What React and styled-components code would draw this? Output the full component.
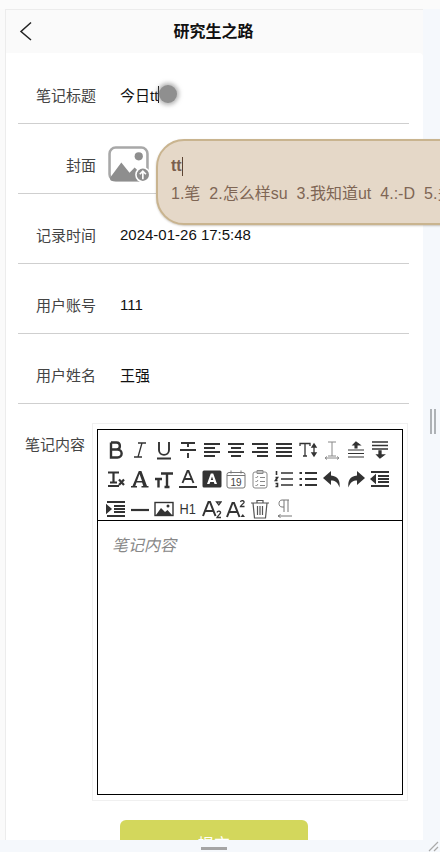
import styled, { createGlobalStyle } from 'styled-components';

const Global = createGlobalStyle`
  html, body { margin: 0; padding: 0; }
  body { font-family: "Liberation Sans", "Noto Sans CJK SC", sans-serif; }
`;

const ink = '#333';

// each toolbar glyph is drawn on a 20x20 grid
const icons = {
  bold: <path d="M5 2.500v15h6.500c5.500 0 5.500 -8 0 -8H5M5 2.500h5.500c4.500 0 4.500 7 0 7" stroke={ink} strokeWidth="2.400" fill="none" />,
  italic: <path d="M8 3h8M4 17h8M12 3l-4 14" stroke={ink} strokeWidth="1.300" fill="none" />,
  underline: <path d="M5 2v8c0 6.500 10 6.500 10 0V2M3 18.500h14" stroke={ink} strokeWidth="1.900" fill="none" />,
  strike: <path d="M3 3h14M10 3v4M2 10h16M10 13v5" stroke={ink} strokeWidth="1.900" fill="none" />,
  left: <path d="M2 4H18M2 8H13M2 12H18M2 16H13" stroke={ink} strokeWidth="1.900" />,
  center: <path d="M2 4H18M5 8H15M2 12H18M5 16H15" stroke={ink} strokeWidth="1.900" />,
  right: <path d="M2 4H18M7 8H18M2 12H18M7 16H18" stroke={ink} strokeWidth="1.900" />,
  justify: <path d="M2 4H18M2 8H18M2 12H18M2 16H18" stroke={ink} strokeWidth="1.900" />,
  size: <path d="M2 6V3.500H12V6M7 3.500V16M5 16H9M16 5v10M14 7l2 -3l2 3zM14 13l2 3l2 -3z" stroke={ink} strokeWidth="1.300" fill={ink} fillOpacity="0" />,
  height: <path d="M6 2h8M6 16h8M10 2v14M3 18h14M3 18l2 -1.500M3 18l2 1.500M17 18l-2 -1.500M17 18l-2 1.500" stroke="#888" strokeWidth="1" fill="none" />,
  before: <path d="M10 2l-3 3h2v3h2V5h3zM2 10H18M2 13.500H18M2 17H18" fill={ink} stroke={ink} strokeWidth="1.100" />,
  after: <path d="M2 2H18M2 5.500H18M2 9H18M10 18l-3 -3h2v-4h2v4h3z" fill={ink} stroke={ink} strokeWidth="1.300" />,
  clear: <path d="M2 3.500h11M7.500 3.500v10M4 13.500h7M2 17h11M13 10.500l5 5.500M18 10.500l-5 5.500" stroke={ink} strokeWidth="2.200" fill="none" />,
  font: <path d="M8.800 2h2.600l5.600 15h1.500v1.500h-7V17h1.800l-1.200 -3.500H6.500L5.300 17H7v1.500H1V17h1.500zM7 12h5L9.500 5z" fill={ink} fillRule="evenodd" />,
  fontSize: <path d="M7 4.500h12M13 3.500v15M10.500 18h5M1 10h7M4.500 10v8.500" stroke={ink} strokeWidth="2.400" fill="none" />,
  fontColor: <path d="M4.500 14l5 -12h1l5 12M6.500 10h7M1 18h18" stroke={ink} strokeWidth="1.900" fill="none" />,
  backColor: <path d="M2 1.500h16a1.500 1.500 0 0 1 1.500 1.500v14a1.500 1.500 0 0 1 -1.500 1.500H2a1.500 1.500 0 0 1 -1.500 -1.500V3A1.500 1.500 0 0 1 2 1.500zM8.800 4.500L5 15h2.500l.7 -2h3.600l.7 2H15L11.200 4.500zM10 7.500l1.200 3.500H8.800z" fill={ink} fillRule="evenodd" />,
  date: (
    <>
      <rect x="1" y="3.500" width="18" height="15.500" rx="2" stroke="#777" fill="none" />
      <path d="M1 6.500H19M5 1.500v3M15 1.500v3" stroke="#777" fill="none" />
      <text x="10" y="16.500" textAnchor="middle" fontSize="10" fontFamily="Liberation Sans" fill="#444">19</text>
    </>
  ),
  todo: (
    <>
      <rect x="3" y="3" width="14" height="16" rx="2" stroke="#888" fill="none" />
      <path d="M7 4.500V1.500h6v3zM5.500 8l1 1l1.500 -2M5.500 12l1 1l1.500 -2M5.500 16l1 1l1.500 -2M10 8.500h5M10 12.500h5M10 16.500h5" stroke="#888" fill="none" />
    </>
  ),
  ordered: <path d="M7 4H19M7 10H19M7 16H19M2.500 2v4M1.500 8.500h2L1.500 11.500h2M1.500 14.500h2v3h-2" stroke={ink} strokeWidth="1.600" fill="none" />,
  unordered: <path d="M7 4H19M7 10H19M7 16H19M1.500 4H4M1.500 10H4M1.500 16H4" stroke={ink} strokeWidth="2" fill="none" />,
  undo: <path d="M9 2L1 9l8 7v-4.500c4 0 6.500 1.500 8.500 7c1 -6.500 -1.500 -11.500 -8.500 -12z" fill={ink} />,
  redo: <path d="M11 2l8 7l-8 7v-4.500c-4 0 -6.500 1.500 -8.500 7c-1 -6.500 1.500 -11.500 8.500 -12z" fill={ink} />,
  outdent: <path d="M1 3H19M8 7H19M8 10H19M8 13H19M1 17H19M5 7v6L1.500 10z" stroke={ink} strokeWidth="2" fill={ink} />,
  indent: <path d="M1 3H19M8 7H19M8 10H19M8 13H19M1 17H19M1 7v6L4.500 10z" stroke={ink} strokeWidth="2" fill={ink} />,
  rule: <path d="M1 11H19" stroke={ink} strokeWidth="2.200" />,
  image: (
    <>
      <rect x="1" y="3.500" width="18" height="13" stroke={ink} strokeWidth="1.400" fill="none" />
      <path d="M2 16l5 -7l4 4l2.500 -2l4.500 5z" fill={ink} />
      <circle cx="14" cy="7" r="1.500" fill={ink} />
    </>
  ),
  sub: (
    <>
      <path d="M1 17L6.500 3h1.500L13.500 17M3.500 12h8" stroke={ink} strokeWidth="2" fill="none" />
      <path d="M14.500 3h4.500l-2.200 3zM15 13.500c.5 -2 4 -1.500 3.500 .5c-.3 1 -3 3 -3.500 4.500h4" fill="none" stroke={ink} strokeWidth="1.300" />
    </>
  ),
  sup: (
    <>
      <path d="M1 18L6.500 4h1.500L13.500 18M3.500 13h8" stroke={ink} strokeWidth="2" fill="none" />
      <path d="M14.500 3c.5 -2 4 -1.500 3.500 .5c-.3 1 -3 2.500 -3.500 4h4" fill="none" stroke={ink} strokeWidth="1.300" />
      <path d="M14.500 18h4.500l-2.200 -3z" fill={ink} />
    </>
  ),
  trash: <path d="M1 4H19M7 4V1.500h6V4M3 4l1.500 15h11L17 4M7.500 7v9M10 7v9M12.500 7v9" stroke="#555" strokeWidth="1.200" fill="none" />,
  para: <path d="M15 1H8c-4 0 -4 7 0 7h2M10 1v12M14 1v12M18 17H4M4 17l2.500 -1.500M4 17l2.500 1.500" stroke="#777" strokeWidth="1" fill="none" />,
};

const rows = [
  ['bold', 'italic', 'underline', 'strike', 'left', 'center', 'right', 'justify', 'size', 'height', 'before', 'after'],
  ['clear', 'font', 'fontSize', 'fontColor', 'backColor', 'date', 'todo', 'ordered', 'unordered', 'undo', 'redo', 'outdent'],
  ['indent', 'rule', 'image', 'heading', 'sub', 'sup', 'trash', 'para'],
];

function App() {
  return (
    <>
      <Global />
      <Screen>
        <TopStrip />
        <Middle>
          <Panel>
            <Header>
              <BackIcon viewBox="0 0 14 20">
                <path d="M12 1.500L2 10.500l10 8.500" fill="none" stroke="#222" strokeWidth="1.500" />
              </BackIcon>
              <Title>研究生之路</Title>
            </Header>
            <Form>
              <Row>
                <Label>笔记标题</Label>
                <Value>今日tt<Caret /></Value>
                <TouchDot />
              </Row>
              <Row>
                <Label>封面</Label>
                <CoverIcon viewBox="0 0 40 36">
                  <rect x="1.500" y="1.500" width="37" height="32" rx="6" fill="none" stroke="#a8a8a8" strokeWidth="2.500" />
                  <path d="M2 31L13 16l8 10l5 -5l11 11v1a1 1 0 0 1 -1 1H4a2 2 0 0 1 -2 -2z" fill="#8e8e8e" />
                  <circle cx="30" cy="10" r="4" fill="#8e8e8e" />
                  <circle cx="34" cy="28" r="7.500" fill="#fff" />
                  <circle cx="34" cy="28" r="6" fill="#8e8e8e" />
                  <path d="M34 32.500v-8M31 27.500l3 -3l3 3" fill="none" stroke="#fff" strokeWidth="1.600" />
                </CoverIcon>
              </Row>
              <Row>
                <Label>记录时间</Label>
                <Value>2024-01-26 17:5:48</Value>
              </Row>
              <Row>
                <Label>用户账号</Label>
                <Value>111</Value>
              </Row>
              <Row>
                <Label>用户姓名</Label>
                <Value>王强</Value>
              </Row>
              <ContentRow>
                <ContentLabel>笔记内容</ContentLabel>
                <EditorFrame>
                  <Editor>
                    <Toolbar>
                      {rows.map((row) => (
                        <ToolRow key={row[0]}>
                          {row.map((name) => (
                            <ToolButton key={name}>
                              {name === 'heading' ? (
                                <HeadingMark>H1</HeadingMark>
                              ) : (
                                <svg width="20" height="20" viewBox="0 0 20 20">{icons[name]}</svg>
                              )}
                            </ToolButton>
                          ))}
                        </ToolRow>
                      ))}
                    </Toolbar>
                    <Placeholder>笔记内容</Placeholder>
                  </Editor>
                </EditorFrame>
              </ContentRow>
              <Submit>提交</Submit>
            </Form>
          </Panel>
          <Gutter>
            <Grip />
          </Gutter>
        </Middle>
        <BottomBar>
          <Handle />
        </BottomBar>
        <Corner viewBox="0 0 12 12">
          <path d="M1 11L10 2M6 11l4 -4" stroke="#aaa" strokeWidth="1.200" />
        </Corner>
        <ImePopup>
          <ImeInput>tt<ImeCaret /></ImeInput>
          <ImeCandidates>
            <span>1.笔</span>
            <span>2.怎么样su</span>
            <span>3.我知道ut</span>
            <span>4.:-D</span>
            <span>5.多</span>
          </ImeCandidates>
        </ImePopup>
      </Screen>
    </>
  );
}

const Screen = styled.div`
  position: relative;
  width: 440px;
  height: 852px;
  overflow: hidden;
  display: flex;
  flex-direction: column;
  background: #f5f8fc;
`;

const TopStrip = styled.div`
  height: 9px;
  background: #fbfbfb;
  flex-shrink: 0;
`;

const Middle = styled.div`
  flex: 1;
  min-height: 0;
  display: flex;
  background: #fafafa;
`;

const Panel = styled.div`
  position: relative;
  margin-left: 5px;
  width: 418px;
  display: flex;
  flex-direction: column;
  overflow: hidden;
  background: #fafafa;
  border-left: 1px solid #ececec;
  border-top: 1px solid #ececec;
  box-sizing: border-box;
`;

const Header = styled.div`
  position: relative;
  height: 43px;
  flex-shrink: 0;
  box-sizing: border-box;
  padding: 0 2px 4px 0;
  display: flex;
  align-items: center;
  justify-content: center;
`;

const BackIcon = styled.svg`
  position: absolute;
  left: 13px;
  top: 11px;
  width: 14px;
  height: 20px;
`;

const Title = styled.div`
  font-family: "Noto Sans CJK SC", sans-serif;
  font-size: 16px;
  font-weight: 700;
  color: #111;
`;

const Form = styled.div`
  flex: 1;
  background: #fff;
  padding: 1px 14px 0 12px;
  display: flex;
  flex-direction: column;
  border-top-right-radius: 4px;
`;

const Row = styled.div`
  position: relative;
  height: 70px;
  flex-shrink: 0;
  box-sizing: border-box;
  padding-top: 11px;
  display: flex;
  align-items: center;
  border-bottom: 1px solid #cfcfcf;
`;

const Label = styled.div`
  width: 78px;
  margin-right: 24px;
  text-align: right;
  font-family: "Noto Sans CJK SC", sans-serif;
  font-size: 15px;
  color: #444;
`;

const Value = styled.div`
  display: flex;
  align-items: center;
  font-family: "Liberation Sans", "Noto Sans CJK SC", sans-serif;
  font-size: 15px;
  color: #111;
`;

const Caret = styled.span`
  width: 1px;
  height: 17px;
  background: #111;
`;

const TouchDot = styled.div`
  position: absolute;
  left: 141px;
  top: 31px;
  width: 18px;
  height: 18px;
  border-radius: 50%;
  background: #8f8f8f;
  box-shadow: 0 0 4px 2px rgba(130, 130, 130, 0.6);
`;

const CoverIcon = styled.svg`
  width: 41px;
  height: 37px;
  margin-left: -12px;
`;

const ContentRow = styled.div`
  display: flex;
  padding-top: 19px;
  flex-shrink: 0;
`;

const ContentLabel = styled.div`
  width: 67px;
  margin-left: 7px;
  padding-top: 11px;
  font-family: "Noto Sans CJK SC", sans-serif;
  font-size: 15px;
  line-height: 20px;
  color: #444;
`;

const EditorFrame = styled.div`
  width: 316px;
  height: 378px;
  box-sizing: border-box;
  padding: 5px 4px;
  border: 1px solid #f0f0f0;
`;

const Editor = styled.div`
  height: 100%;
  box-sizing: border-box;
  border: 1px solid #000;
  display: flex;
  flex-direction: column;
`;

const Toolbar = styled.div`
  height: 91px;
  box-sizing: border-box;
  flex-shrink: 0;
  padding: 5px 0 0 6px;
  border-bottom: 1px solid #000;
`;

const ToolRow = styled.div`
  display: flex;
  height: 29.600px;
  align-items: center;
`;

const ToolButton = styled.div`
  width: 24px;
  flex-shrink: 0;
  display: flex;
  justify-content: center;
`;

const HeadingMark = styled.span`
  font-family: "Liberation Sans", sans-serif;
  font-size: 15px;
  color: ${ink};
  transform: scaleX(0.85);
`;

const Placeholder = styled.div`
  padding: 11px 0 0 14px;
  font-family: "Noto Sans CJK SC", sans-serif;
  font-size: 16px;
  font-style: italic;
  color: #888;
`;

const Submit = styled.div`
  margin: 19px 0 0 102px;
  width: 188px;
  height: 46px;
  flex-shrink: 0;
  border-radius: 6px;
  background: #d3d75c;
  color: #fff;
  text-align: center;
  line-height: 46px;
  font-family: "Noto Sans CJK SC", sans-serif;
  font-size: 16px;
`;

const ImePopup = styled.div`
  position: absolute;
  left: 156px;
  top: 139px;
  width: 320px;
  height: 86px;
  box-sizing: border-box;
  padding: 13px 0 0 13px;
  background: #e5d8c8;
  border: 2px solid #c9b48f;
  border-radius: 28px;
  box-shadow: 0 1px 2px rgba(90, 70, 40, 0.3);
  overflow: hidden;
`;

const ImeInput = styled.div`
  display: flex;
  align-items: center;
  height: 24px;
  font-size: 16px;
  font-weight: 700;
  color: #7a5f4e;
`;

const ImeCaret = styled.span`
  width: 1px;
  height: 19px;
  background: #5d4433;
`;

const ImeCandidates = styled.div`
  display: flex;
  gap: 9px;
  margin-top: 5px;
  font-size: 16px;
  line-height: 22px;
  color: #7f6655;
  white-space: nowrap;
  font-family: "Liberation Sans", "Noto Sans CJK SC", sans-serif;
`;

const Gutter = styled.div`
  flex: 1;
  background: #f5f8fc;
  display: flex;
  align-items: center;
  justify-content: center;
  padding-left: 3px;
  padding-bottom: 6px;
`;

const Grip = styled.div`
  width: 2px;
  height: 25px;
  border: solid #aeb2b6;
  border-width: 0 2px;
`;

const BottomBar = styled.div`
  height: 12px;
  flex-shrink: 0;
  background: #f5f8fc;
  display: flex;
  justify-content: center;
  padding: 7px 13px 0 0;
  box-sizing: border-box;
`;

const Handle = styled.div`
  width: 26px;
  height: 3px;
  background: #a5a5a5;
`;

const Corner = styled.svg`
  position: absolute;
  right: 0;
  bottom: 0;
  width: 12px;
  height: 12px;
`;

export default App;
